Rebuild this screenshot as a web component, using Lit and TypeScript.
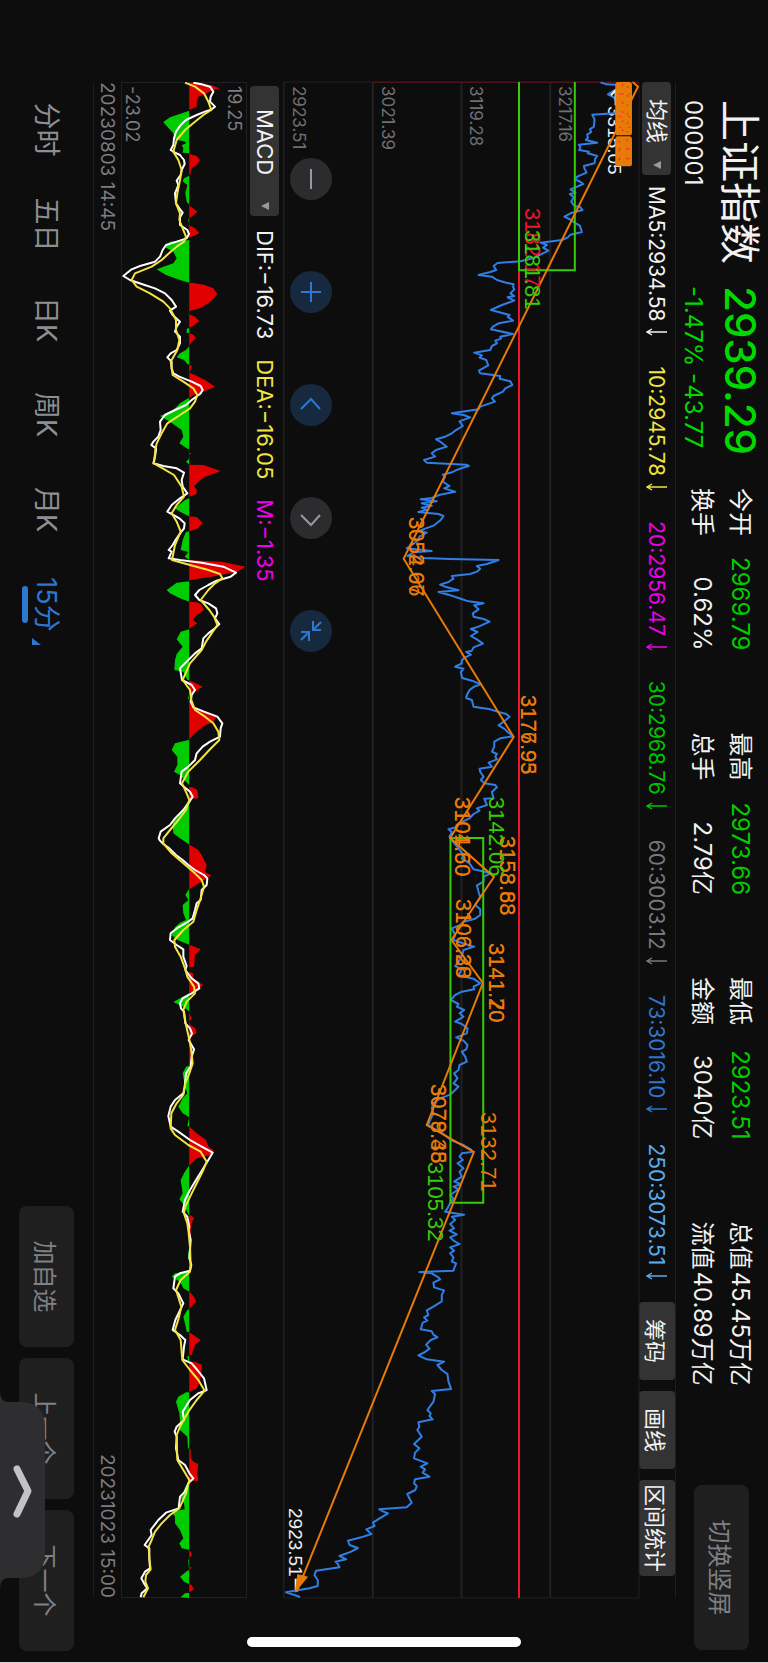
import { LitElement, html, svg, css } from "lit";
import { customElement, property, state } from "lit/decorators.js";
import { classMap } from "lit/directives/class-map.js";
import { styleMap } from "lit/directives/style-map.js";

/** Part of a series: offsets of its local origin, then "time,value" pairs. */
type Segment = { t: number; v: number; points: string };

type Point = [number, number];

const PLOT_W = 4548;
const PRICE_H = 1062;
const MACD_H = 378;
const MACD_ZERO = 205;

const unpack = (segments: Segment[]): Point[] =>
  segments.flatMap((s) =>
    s.points
      .trim()
      .split(/\s+/)
      .map((pair): Point => {
        const [t, v] = pair.split(",").map(Number);
        return [t + s.t, v + s.v];
      }),
  );

const toPoints = (points: Point[], height: number) =>
  points.map(([t, v]) => `${t},${height - v}`).join(" ");

const PRICE: Segment[] = [
  {
    t: -66,
    v: 297,
    points: `67,650 73,668 75,705 85,712 92,690 103,672 112,690 130,700 150,700 160,690 164,625 178,632 200,630 208,618
      216,622 224,610 234,612 240,606 248,640 254,585 262,590 270,586 275,615 280,612 288,640 296,634 310,632 318,600
      326,602 338,608 350,580 358,574 366,590 372,598 380,580 388,560 398,575 402,558 412,570 425,562 438,572 442,590
      450,596 460,560 470,542 480,562 488,572 497,588 516,594 524,560 532,552 540,535 548,470 555,490 563,478 572,494
      584,470 594,450 604,410 609,342 618,330 630,338 636,320 645,285 650,325 660,340 668,368 673,390 680,388 688,392
      700,380 708,392 712,372 722,392 735,355 750,322 765,378 770,372 782,388 790,345 800,328 808,322 822,388 830,350
      836,352 842,335 850,340 858,325 870,320 878,272 886,295 893,288 900,308 916,314 932,286 940,290 948,350 956,348
      964,380 975,386 985,365 995,358 1008,330 1015,325 1025,334 1040,290 1048,285 1060,205 1065,240 1072,260 1084,228
      1098,238 1112,215 1120,205 1130,185 1138,158 1146,172 1160,190 1170,158 1180,145 1190,155`,
  },
  {
    t: 1074,
    v: 297,
    points: `60,122 68,130 74,248 78,256 84,235 92,215 96,208 104,178 110,185 125,178 138,198 145,182 155,215 164,170
      174,145 178,112 184,160 190,115 197,145 203,115 210,130 216,105 222,165 228,180 240,172 256,152 266,125 272,110
      278,130 290,108 300,105 315,85 325,70 333,145 337,90 348,72 354,120 357,200 360,345 372,310 378,280 386,290
      395,280 402,260 408,205 416,210 426,195 434,170 440,185 451,225 456,165 464,195 474,225 484,255 490,300 496,272
      508,285 520,268 530,270 537,300 545,318 560,285 567,262 576,282 588,262 598,280 611,298 622,270 632,265 636,248
      644,262 655,240 664,234 670,235 680,215 686,240 696,232 714,236 722,265 733,292 740,272 750,258 765,250 774,248
      780,265 800,270 808,320 816,345 822,368 830,378 845,360 856,345 866,362 876,372 889,388 895,350 905,332 920,332
      935,325 942,340 950,335 958,340 968,315 980,325 986,288 996,290 1010,300 1020,292 1030,302 1035,335 1042,340
      1056,325 1075,330 1076,302 1095,310 1105,280 1112,288 1122,270 1135,258 1150,225 1162,218`,
  },
  {
    t: 2214,
    v: 297,
    points: `28,195 36,205 50,198 60,205 85,225 105,240 115,235 130,258 148,270 160,322 170,300 185,300 196,280 215,285
      232,290 255,275 268,290 285,290 296,275 305,240 315,230 325,205 345,215 360,210 372,245 380,272 390,240 410,235
      425,225 438,215 448,235 466,225 476,270 490,290 500,270 508,272 515,235 525,215 540,202 552,225 560,220 570,242
      580,228 590,240 605,215 612,235 625,252 640,250 652,218 662,240 675,252 688,248 695,235 710,245 725,250 735,228
      750,225 760,212 775,222 790,210 800,225 810,215 824,200 835,170 850,150 865,145 880,150 900,140 915,135 925,150
      935,170 950,190 962,205 975,240 988,262 996,265 1000,235 1010,228 1020,238 1030,222 1045,240 1055,228 1070,235
      1085,212 1092,232 1100,210 1108,225 1125,200 1135,210 1150,200 1165,192`,
  },
  {
    t: 3354,
    v: 297,
    points: `35,185 44,242 50,205 60,215 72,200 85,212 92,198 103,220 112,200 122,210 132,228 142,200 152,212 160,200
      172,210 185,205 190,218 205,212 212,210 216,108 220,145 232,165 238,170 248,150 262,152 271,182 285,175 304,175
      320,150 331,130 345,135 352,122 362,132 368,118 388,112 394,145 404,150 412,162 420,142 434,128 446,138 456,125
      466,105 478,130 485,182 495,162 510,175 522,192 545,195 567,203 573,145 582,155 605,150 630,132 640,142 648,138
      658,148 667,105 680,108 690,102 710,115 732,92 745,108 758,95 775,92 790,132 800,112 808,125 818,118 830,138
      838,95 850,92 858,100 870,96 882,72 895,78 908,85 922,70 928,-12`,
  },
  {
    t: 3564,
    v: -44,
    points: `724,340 730,355 745,330 758,310 768,315 778,290 792,305 802,275 812,235 825,240 834,265 845,245 858,210
      868,230 875,198 882,205 892,210 902,140 915,135 930,145 948,145 955,120 967,50 975,75 981,92`,
  },
];

const DIF: Segment[] = [
  {
    t: -66,
    v: -123,
    points: `68,340 73,365 80,390 95,400 110,392 125,390 140,405 148,395 155,375 165,350 180,318 195,302 215,288 235,282
      255,280 270,272 278,285 285,300 300,312 312,314 330,305 345,302 362,290 375,295 400,285 430,288 445,298 458,308
      472,300 495,300 510,322 522,327 535,320 545,290 555,258 570,248 590,240 605,225 618,180 628,155 648,130 660,150
      672,185 685,225 700,255 720,275 740,288 752,270 765,278 785,300 800,290 815,285 830,300 850,300 870,290 880,272
      892,262 905,275 925,275 940,280 950,298 965,335 978,362 990,368 1000,362 1020,335 1035,318 1050,285 1065,255
      1085,240 1110,242 1130,235 1145,220 1155,214 1165,228`,
  },
  {
    t: 1104,
    v: -123,
    points: `0,228 20,225 40,220 48,250 55,290 68,312 90,305 110,308 130,322 145,300 165,275 185,262 192,275 205,298
      220,314 235,312 248,302 268,288 285,278 300,266 305,275 325,266 330,300 338,365 350,430 368,468 380,452 392,410
      405,385 420,358 435,345 450,358 460,385 475,408 490,412 505,405 522,418 535,405 550,385 565,370 595,365 610,345
      630,325 655,300 690,306 705,335 720,345 735,335 755,332 772,340 785,372 800,412 820,427 835,422 860,420 875,390
      890,368 910,350 930,345 950,325 965,305 1000,300 1010,312 1025,330 1040,338 1060,325 1080,310 1105,285 1125,270
      1145,242 1165,236`,
  },
  {
    t: 2274,
    v: -123,
    points: `2,240 12,250 25,268 45,288 60,308 75,325 90,345 105,372 115,382 135,380 150,365 180,362 190,350 210,345
      235,338 245,325 262,295 280,272 300,270 315,290 328,310 350,310 378,320 390,316 415,335 430,355 445,358 460,335
      475,308 490,300 505,303 515,312 550,316 565,330 580,336 600,326 628,342 650,335 680,332 700,318 740,314 760,310
      780,285 800,272 828,265 860,272 875,295 900,330 920,365 938,398 960,385 985,370 1020,348 1050,330 1080,315
      1115,308 1130,322 1160,328`,
  },
  {
    t: 3444,
    v: -123,
    points: `0,326 30,332 60,330 85,328 105,334 122,330 130,300 140,285 175,280 190,295 220,310 245,298 270,286 300,278
      315,300 330,316 350,312 388,308 400,335 420,352 445,372 480,380 490,355 510,330 545,308 570,312 590,290 605,284
      620,290 655,288 690,295 705,315 730,328 745,340 760,325 785,315 800,300 835,296 848,258 870,235 900,212 915,215
      945,194 955,208 985,208 1015,210 1025,195 1045,184 1060,192 1075,202 1090,185 1102,182`,
  },
];

const DEA: Segment[] = [
  {
    t: -66,
    v: -123,
    points: `68,315 80,345 100,372 125,385 150,394 165,370 185,345 210,315 240,290 275,280 300,295 330,305 360,300
      400,292 430,288 460,300 480,298 505,308 530,318 545,312 560,290 575,272 600,245 620,215 640,165 660,155 680,170
      700,210 725,250 745,270 780,288 810,288 840,298 870,292 905,272 945,278 965,310 985,340 1005,352 1025,345
      1045,330 1065,300 1090,262 1120,245 1150,230`,
  },
  {
    t: 1104,
    v: -123,
    points: `0,226 40,222 55,248 75,282 110,305 140,312 165,290 190,275 215,290 245,302 285,285 330,276 345,330 360,385
      372,420 385,427 400,405 420,385 450,362 480,388 500,402 525,412 550,395 575,378 600,365 640,330 690,308 720,330
      750,334 780,345 800,375 820,400 845,415 870,418 900,388 930,360 965,325 1000,306 1030,320 1050,328 1080,318
      1110,295 1140,270 1165,250`,
  },
  {
    t: 2274,
    v: -123,
    points: `10,250 40,275 70,310 100,345 120,365 140,372 175,362 210,350 245,340 270,310 300,283 320,285 350,302
      385,315 410,322 440,342 460,345 485,320 510,310 555,318 590,326 625,333 670,338 700,328 730,316 765,310 790,290
      820,274 865,272 885,285 915,325 935,362 965,380 990,370 1020,355 1060,335 1100,316 1120,312 1150,322`,
  },
  {
    t: 3444,
    v: -123,
    points: `0,325 50,330 105,332 125,330 150,302 180,288 230,304 265,296 300,285 330,302 390,307 420,330 450,355
      482,374 510,350 545,325 590,300 615,290 690,292 720,310 750,328 790,318 835,298 855,270 880,245 905,225 930,215
      950,206 985,208 1018,212 1035,198 1055,196 1075,204 1102,190`,
  },
];

const HISTOGRAM: Segment[] = [
  {
    t: -66,
    v: -123,
    points: `68,328 68,345 76,395 85,418 90,400 100,380 110,355 125,350 140,350 150,328 152,328 158,310 172,270 186,250
      200,262 220,280 238,285 245,315 250,318 256,305 265,310 278,308 280,328 282,330 288,350 300,360 315,350 325,335
      345,330 346,328 347,328 355,312 364,308 375,322 400,316 425,320 435,328 438,330 455,352 470,335 474,328 475,326
      485,325 486,328 497,330 505,345 520,358 532,332 535,328 540,328 545,270 562,255 575,280 595,290 610,280 628,230
      645,258 660,300 668,328 669,340 675,375 685,400 702,412 715,402 730,385 745,360 752,330 758,328 764,330 770,345
      784,358 797,340 803,328 807,320 818,320 820,328 824,340 834,348 850,332 858,328 870,318 880,300 892,290 900,312
      912,322 914,328 918,336 930,332 938,328 945,345 960,375 980,405 995,370 1005,340 1014,328 1016,322 1030,300
      1050,280 1068,240 1085,270 1110,305 1130,310 1150,298 1166,322 1167,328`,
  },
  {
    t: 1104,
    v: -123,
    points: `8,328 10,334 16,328 28,326 35,318 44,328 45,370 63,422 80,375 95,355 110,342 118,350 132,350 140,328
      144,328 150,315 175,285 185,300 198,325 199,328 201,350 218,368 235,355 244,328 246,318 270,308 300,302 306,325
      320,314 330,328 331,328 335,425 350,497 365,470 380,395 390,330 394,328 398,290 420,260 430,270 445,300 455,328
      457,350 462,362 480,372 500,345 510,338 520,352 535,330 538,328 545,302 568,290 590,308 612,290 630,285 660,283
      665,310 690,322 691,328 696,340 710,368 725,345 732,328 745,324 752,328 755,332 775,345 785,375 800,410 815,400
      830,368 850,345 868,328 869,328 880,285 900,275 920,292 945,292 965,282 975,300 995,318 1006,328 1010,328
      1013,340 1020,352 1045,355 1047,328 1050,326 1075,310 1095,295 1120,278 1150,280 1165,300`,
  },
  {
    t: 2274,
    v: -123,
    points: `0,308 10,322 14,328 15,330 30,355 45,365 75,380 95,375 107,394 125,365 140,340 148,328 150,325 165,316
      180,325 195,308 220,310 240,318 248,300 262,285 285,275 300,292 314,328 316,332 328,362 345,345 380,342 382,328
      396,328 400,340 412,340 418,340 435,370 450,348 460,328 461,325 475,300 486,280 500,310 515,328 518,328 535,335
      545,328 556,332 565,345 578,350 590,335 593,328 605,328 625,333 655,332 675,333 677,328 680,318 700,308 740,315
      760,322 775,308 800,295 820,308 832,328 842,325 858,322 860,328 862,330 880,350 900,378 920,385 930,400 945,395
      955,350 975,330 976,328 978,326 1000,312 1020,302 1060,308 1078,298 1095,312 1125,326 1126,328 1127,335 1135,342
      1150,335 1165,332`,
  },
  {
    t: 3444,
    v: -123,
    points: `0,332 30,334 40,328 50,328 75,324 95,328 100,332 118,330 123,328 124,328 130,285 140,275 155,300 175,310
      185,328 187,330 200,342 215,348 235,330 237,328 240,322 260,310 285,316 305,320 307,328 311,335 330,362 345,345
      375,335 376,328 380,322 392,324 394,328 396,345 404,366 430,364 455,360 475,350 486,328 487,318 500,295 515,288
      550,298 575,300 600,300 620,322 655,324 657,328 658,332 685,332 695,340 702,355 730,352 752,355 753,328 755,324
      780,312 805,302 820,312 838,314 845,275 860,285 880,285 900,300 925,310 940,298 955,305 960,328 965,332 975,336
      985,328 990,325 1010,326 1011,328 1012,335 1020,328 1022,322 1040,300 1055,312 1062,328 1065,335 1078,342
      1085,330 1088,328 1090,315 1102,302 1104,328`,
  },
];

/** Swing line through the highs and lows, in plot units. */
const SWING: Point[] = [
  [0, 1043],
  [14, 1059],
  [1430, 358],
  [1965, 687],
  [2268, 497],
  [2385, 628],
  [2574, 501],
  [2703, 595],
  [3129, 427],
  [3210, 568],
  [4530, 38],
];

type Mark = { text: string; t: number; v: number; tone: string };

const MARKS: Mark[] = [
  { text: "3315.05", t: 24, v: 331, tone: "plain" },
  { text: "3182.17", t: 126, v: 249, tone: "red" },
  { text: "3181.81", t: 148, v: 249, tone: "green" },
  { text: "3054.67", t: 435, v: 134, tone: "orange" },
  { text: "3052.06", t: 435, v: 134, tone: "orange" },
  { text: "3177.93", t: 613, v: 245, tone: "orange" },
  { text: "3176.95", t: 613, v: 245, tone: "orange" },
  { text: "3104.50", t: 715, v: 180, tone: "orange" },
  { text: "3101.60", t: 715, v: 180, tone: "orange" },
  { text: "3158.88", t: 754, v: 224, tone: "orange" },
  { text: "3153.63", t: 754, v: 224, tone: "orange" },
  { text: "3142.06", t: 715, v: 213, tone: "green" },
  { text: "3106.28", t: 817, v: 181, tone: "orange" },
  { text: "3106.30", t: 817, v: 181, tone: "orange" },
  { text: "3141.20", t: 861, v: 213, tone: "orange" },
  { text: "3141.70", t: 861, v: 213, tone: "orange" },
  { text: "3079.45", t: 1002, v: 156, tone: "orange" },
  { text: "3078.38", t: 1002, v: 156, tone: "orange" },
  { text: "3132.71", t: 1030, v: 205, tone: "orange" },
  { text: "3105.32", t: 1080, v: 153, tone: "green" },
  { text: "2923.51", t: 1426, v: 13, tone: "plain" },
];

const AVERAGES = [
  { label: "MA5", value: "2934.58", tone: "white" },
  { label: "10", value: "2945.78", tone: "yellow" },
  { label: "20", value: "2956.47", tone: "magenta" },
  { label: "30", value: "2968.76", tone: "lime" },
  { label: "60", value: "3003.12", tone: "grey" },
  { label: "73", value: "3016.10", tone: "blue" },
  { label: "250", value: "3073.51", tone: "sky" },
];

const STATS = [
  [
    { label: "今开", value: "2969.79", down: true },
    { label: "换手", value: "0.62%", down: false },
  ],
  [
    { label: "最高", value: "2973.66", down: true },
    { label: "总手", value: "2.79亿", down: false },
  ],
  [
    { label: "最低", value: "2923.51", down: true },
    { label: "金额", value: "3040亿", down: false },
  ],
  [
    { label: "总值", value: "45.45万亿", down: false },
    { label: "流值", value: "40.89万亿", down: false },
  ],
];

@customElement("indicator-select")
export class IndicatorSelect extends LitElement {
  @property() name = "";
  @property({ type: Array }) options: string[] = [];

  static styles = css`
    :host {
      display: block;
      flex: none;
    }
    .box {
      display: grid;
      align-items: center;
      height: 29px;
      border-radius: 4px;
      background: #333;
    }
    .field {
      grid-area: 1 / 1;
      appearance: none;
      width: 100%;
      height: 29px;
      margin: 0;
      padding: 0 0 0 var(--inset, 17px);
      border: 0;
      background: none;
      color: #f2f2f2;
      font: inherit;
    }
    .arrow {
      grid-area: 1 / 1;
      justify-self: end;
      width: 8px;
      height: 8px;
      margin-right: 6px;
      fill: #98989d;
      pointer-events: none;
    }
  `;

  render() {
    return html`<div class="box">
      <select class="field" aria-label=${this.name}>
        ${this.options.map((o) => html`<option>${o}</option>`)}
      </select>
      <svg class="arrow" viewBox="0 0 8 8" aria-hidden="true"><path d="M0 0h8L4 8z" /></svg>
    </div>`;
  }
}

@customElement("price-chart")
export class PriceChart extends LitElement {
  static styles = css`
    :host {
      display: block;
      position: relative;
      color: #6f6f74;
    }
    .plot {
      position: relative;
      z-index: 1;
      display: block;
      width: 100%;
      height: 100%;
      overflow: visible;
    }
    .plot * {
      vector-effect: non-scaling-stroke;
    }
    .grid {
      stroke: #212123;
      stroke-width: 2;
    }
    .frame {
      fill: none;
      stroke: #212123;
      stroke-width: 1;
    }
    .limit {
      stroke: #5c1420;
      stroke-width: 1;
    }
    .price {
      fill: none;
      stroke: #2f7fe6;
      stroke-width: 2;
      stroke-linejoin: round;
    }
    .zone {
      fill: none;
      stroke: #37cc08;
      stroke-width: 2;
    }
    .level {
      stroke: #f0142d;
      stroke-width: 2;
    }
    .swing {
      fill: none;
      stroke: #e87a08;
      stroke-width: 2;
    }
    .head,
    .cluster {
      fill: #e87a08;
    }
    .specks {
      fill: none;
      stroke: #f5242d;
      stroke-width: 1;
      stroke-dasharray: 2 7;
    }
    .pointer {
      fill: none;
      stroke: #f2f2f2;
      stroke-width: 2;
    }
    .mark {
      position: absolute;
      z-index: 2;
      margin-bottom: -13px;
      font: 22px/22px "Liberation Sans", sans-serif;
      white-space: nowrap;
    }
    .plain {
      z-index: 0;
      color: #f0f0f0;
      font-size: 19px;
    }
    .red {
      color: #f0142d;
    }
    .green {
      color: #37cc08;
    }
    .orange {
      color: #e87a08;
    }
    .axis {
      position: absolute;
      inset: 0;
      display: grid;
      grid-template-rows: repeat(4, 1fr);
      font-size: 17px;
      line-height: 17px;
    }
    .tick {
      align-self: end;
      padding: 0 0 6px 4px;
    }
  `;

  render() {
    const [endT, endV] = SWING[SWING.length - 1];
    return html`
      <svg class="plot" viewBox="0 0 ${PLOT_W} ${PRICE_H}" preserveAspectRatio="none" role="img" aria-label="上证指数 15分">
        <rect class="frame" width=${PLOT_W} height=${PRICE_H} />
        ${[1, 2, 3].map((i) => {
          const y = (PRICE_H / 4) * i;
          return svg`<line class="grid" x1="0" x2=${PLOT_W} y1=${y} y2=${y} />`;
        })}
        <line class="limit" x1="1" x2="1" y1="0" y2="796" />
        <polyline class="price" points=${toPoints(unpack(PRICE), PRICE_H)} />
        <path class="pointer" d="M70 70H26M40 56L24 70L40 84" />
        <rect class="cluster" x="0" y="21" width="160" height="50" rx="8" />
        <rect class="cluster" x="163" y="21" width="90" height="50" rx="8" />
        <path
          class="specks"
          d="M12 34H150M6 49H156M172 36H244M176 59H248M36 26V67M104 26V67M136 26V67M200 28V67M230 28V67"
        />
        <line class="level" x1="495" x2=${PLOT_W} y1="359" y2="359" />
        <path class="zone" d="M0 192H565V359H0M2268 466H3362V564H2268z" />
        <polyline class="swing" points=${toPoints(SWING, PRICE_H)} />
        <path class="pointer" d="M4490 ${PRICE_H - endV + 3}h34" />
        <polygon
          class="head"
          points="${endT + 4},${PRICE_H - endV + 6} ${endT - 54},${PRICE_H - endV - 2} ${endT - 46},${PRICE_H - endV - 34}"
        />
      </svg>
      <div class="axis">
        ${["3217.16", "3119.28", "3021.39", "2923.51"].map((v) => html`<span class="tick">${v}</span>`)}
      </div>
      ${MARKS.map(
        (m) => html`<span
          class="mark ${m.tone}"
          style=${styleMap({ left: `${(m.t / 1516) * 100}%`, bottom: `${(m.v / 354) * 100}%` })}
          >${m.text}</span
        >`,
      )}
    `;
  }
}

@customElement("macd-chart")
export class MacdChart extends LitElement {
  static styles = css`
    :host {
      display: block;
      position: relative;
      color: #7c7c81;
    }
    .plot {
      display: block;
      width: 100%;
      height: 100%;
    }
    .plot * {
      vector-effect: non-scaling-stroke;
    }
    .frame {
      fill: none;
      stroke: #212123;
      stroke-width: 2;
    }
    .up {
      fill: #e10000;
    }
    .down {
      fill: #00cc00;
    }
    .dif,
    .dea {
      fill: none;
      stroke-width: 2;
      stroke-linejoin: round;
    }
    .dif {
      stroke: #fff;
    }
    .dea {
      stroke: #f5e342;
    }
    .axis {
      position: absolute;
      inset: 0;
      display: flex;
      flex-direction: column;
      justify-content: space-between;
      padding: 3px 4px 1px;
      font-size: 18px;
      line-height: 20px;
    }
  `;

  render() {
    const zero = MACD_H - MACD_ZERO;
    const bars = toPoints(unpack(HISTOGRAM), MACD_H);
    const area = `0,${zero} ${bars} ${PLOT_W},${zero}`;
    return html`
      <svg class="plot" viewBox="0 0 ${PLOT_W} ${MACD_H}" preserveAspectRatio="none" role="img" aria-label="MACD">
        <clipPath id="above"><rect width=${PLOT_W} height=${zero} /></clipPath>
        <clipPath id="below"><rect y=${zero} width=${PLOT_W} height=${MACD_ZERO} /></clipPath>
        <rect class="frame" width=${PLOT_W} height=${MACD_H} />
        <polygon class="up" clip-path="url(#above)" points=${area} />
        <polygon class="down" clip-path="url(#below)" points=${area} />
        <polyline class="dif" points=${toPoints(unpack(DIF), MACD_H)} />
        <polyline class="dea" points=${toPoints(unpack(DEA), MACD_H)} />
      </svg>
      <div class="axis"><span>19.25</span><span>-23.02</span></div>
    `;
  }
}

@customElement("app-root")
export class AppRoot extends LitElement {
  @state() private period = "15分";

  static styles = css`
    :host {
      display: block;
      height: 100vh;
      overflow: hidden;
      background: #0d0d0d;
    }
    .stage {
      position: relative;
      display: flex;
      flex-direction: column;
      box-sizing: border-box;
      width: 100vh;
      height: 100vw;
      border-right: 1px solid #d4d4d4;
      transform: translateX(100vw) rotate(90deg);
      transform-origin: 0 0;
      overflow: hidden;
      background: #0d0d0d;
      color: #f2f2f2;
      font-family: Inter, "Noto Sans CJK SC", sans-serif;
      font-size: 22px;
    }
    button {
      margin: 0;
      padding: 0;
      border: 0;
      font: inherit;
      color: inherit;
    }
    .header {
      display: flex;
      align-items: flex-start;
      box-sizing: border-box;
      height: 92px;
      padding: 0 12px 0 100px;
      font-size: 24px;
    }
    .ident {
      width: 186px;
    }
    .name {
      margin: 0;
      padding-top: 3px;
      font-size: 41px;
      font-weight: 400;
      line-height: 50px;
    }
    .code {
      margin: 0;
      padding-top: 6px;
      line-height: 32px;
    }
    .quote {
      width: 202px;
      color: #00d800;
    }
    .last {
      margin: 0;
      padding-top: 3px;
      font-size: 42px;
      font-weight: 500;
      line-height: 50px;
    }
    .stats {
      flex: 1;
      display: grid;
      grid-template-columns: repeat(4, 1fr);
      column-gap: 82px;
      margin: 0;
      padding-top: 9px;
      line-height: 38px;
    }
    .column:last-child .stat {
      justify-content: flex-start;
      gap: 2px;
    }
    .stat {
      display: flex;
      justify-content: space-between;
      white-space: nowrap;
    }
    .stat dt,
    .stat dd {
      margin: 0;
    }
    .lower {
      color: #00cc00;
    }
    .soft {
      height: 55px;
      border-radius: 8px;
      background: #1f1f1f;
      color: #808085;
      font-size: 24px;
    }
    .rotate {
      width: 165px;
      margin: 19px 0 0 99px;
    }
    .body {
      flex: 1;
      display: flex;
      flex-direction: column;
      margin: 0 64px 0 82px;
    }
    .bar {
      display: flex;
      align-items: center;
      height: 36px;
      border-top: 1px solid #1e1e20;
      white-space: nowrap;
    }
    .ma-select {
      width: 93px;
    }
    .averages {
      display: flex;
      gap: 30px;
      margin-left: 11px;
      font-size: 21px;
    }
    .average {
      display: flex;
      align-items: center;
      gap: 7px;
    }
    .dir {
      width: 8px;
      height: 21px;
      fill: none;
      stroke: currentColor;
      stroke-width: 1.4;
    }
    .actions {
      flex: none;
      display: flex;
      gap: 11px;
      margin: 0 22px 0 auto;
    }
    .action {
      min-width: 78px;
      height: 36px;
      padding: 0 4px;
      border-radius: 4px;
      background: #333;
    }
    .price-area {
      flex: 1;
      position: relative;
      display: grid;
    }
    .tools {
      position: absolute;
      z-index: 3;
      left: 76px;
      bottom: 6px;
      display: flex;
      gap: 71px;
    }
    .tool {
      width: 42px;
      height: 42px;
      border-radius: 50%;
      background: #2c2c2e;
      color: #9a9a9e;
    }
    .tool.active {
      background: #17293f;
      color: #2d78d2;
    }
    .glyph {
      display: block;
      width: 42px;
      height: 42px;
      fill: none;
      stroke: currentColor;
      stroke-width: 2;
    }
    .macd-select {
      width: 130px;
      margin-left: 4px;
      --inset: 23px;
    }
    .readings {
      display: flex;
      gap: 20px;
      margin-left: 14px;
    }
    .macd-area {
      height: 126px;
    }
    .dates {
      display: flex;
      justify-content: space-between;
      height: 27px;
      border-bottom: 1px solid #1e1e20;
      color: #7c7c81;
      font-size: 19px;
      line-height: 27px;
    }
    .footer {
      display: flex;
      align-items: flex-start;
      height: 93px;
      padding: 0 11px 0 82px;
    }
    .periods {
      display: flex;
      padding-top: 28px;
    }
    .period {
      display: flex;
      flex-direction: column;
      align-items: center;
      width: 95px;
      background: none;
      color: #8e8e93;
      font-size: 27px;
      line-height: 37px;
    }
    .period.current {
      color: #2e76cf;
    }
    .more {
      display: inline-block;
      width: 7px;
      height: 9px;
      margin: 0 -13px -5px 6px;
      fill: currentColor;
    }
    .underline {
      width: 37px;
      height: 6px;
      border-radius: 3px;
      background: currentColor;
    }
    .nav {
      display: flex;
      gap: 11px;
      margin: 19px 0 0 auto;
    }
    .nav .soft {
      width: 141px;
    }
    .handle {
      position: absolute;
      right: 72px;
      bottom: 0;
      width: 200px;
      height: 45px;
      background: none;
    }
    .handle-shape {
      display: block;
      width: 200px;
      height: 45px;
    }
    .home {
      position: absolute;
      top: 247px;
      bottom: 247px;
      right: 15px;
      width: 10px;
      border-radius: 5px;
      background: #fff;
    }
    .white {
      color: #f2f2f2;
    }
    .yellow {
      color: #f0e442;
    }
    .magenta {
      color: #ee00ee;
    }
    .lime {
      color: #00c400;
    }
    .grey {
      color: #77777c;
    }
    .blue {
      color: #2e76cf;
    }
    .sky {
      color: #58acec;
    }
  `;

  private tool(label: string, active: boolean, d: string) {
    return html`<button class=${classMap({ tool: true, active })} aria-label=${label}>
      <svg class="glyph" viewBox="0 0 42 42" aria-hidden="true"><path d=${d} /></svg>
    </button>`;
  }

  render() {
    return html`
      <main class="stage">
        <header class="header">
          <div class="ident">
            <h1 class="name">上证指数</h1>
            <p class="code">000001</p>
          </div>
          <div class="quote">
            <p class="last">2939.29</p>
            <p class="code">-1.47% -43.77</p>
          </div>
          <dl class="stats">
            ${STATS.map(
              (column) => html`<div class="column">
                ${column.map(
                  (s) => html`<div class="stat">
                    <dt>${s.label}</dt>
                    <dd class=${classMap({ lower: s.down })}>${s.value}</dd>
                  </div>`,
                )}
              </div>`,
            )}
          </dl>
          <button class="soft rotate">切换竖屏</button>
        </header>

        <section class="body">
          <div class="bar">
            <indicator-select class="ma-select" name="主图指标" .options=${["均线", "BOLL"]}></indicator-select>
            <div class="averages">
              ${AVERAGES.map(
                (a) => html`<span class="average ${a.tone}"
                  ><span>${a.label}:${a.value}</span
                  ><svg class="dir" viewBox="0 0 8 21" role="img" aria-label="下降"><path d="M4 0V20M1 15L4 20L7 15" /></svg
                ></span>`,
              )}
            </div>
            <div class="actions">
              <button class="action">筹码</button>
              <button class="action">画线</button>
              <button class="action">区间统计</button>
            </div>
          </div>
          <div class="price-area">
            <price-chart></price-chart>
            <div class="tools">
              ${this.tool("缩小", false, "M11 21H31")} ${this.tool("放大", true, "M11 21H31M21 11V31")}
              ${this.tool("左移", true, "M25 12L15 21L25 31")} ${this.tool("右移", false, "M18 12L28 21L18 31")}
              ${this.tool("收起", true, "M11 19H20V11M20 19L12 11M31 23H22V31M22 23L30 31")}
            </div>
          </div>
          <div class="bar">
            <indicator-select class="macd-select" name="副图指标" .options=${["MACD", "KDJ"]}></indicator-select>
            <div class="readings">
              <span class="white">DIF:−16.73</span>
              <span class="yellow">DEA:−16.05</span>
              <span class="magenta">M:−1.35</span>
            </div>
          </div>
          <macd-chart class="macd-area"></macd-chart>
          <div class="dates"><time>20230803 14:45</time><time>20231023 15:00</time></div>
        </section>

        <footer class="footer">
          <nav class="periods">
            ${["分时", "五日", "日K", "周K", "月K", "15分"].map((p) => {
              const current = p === this.period;
              return html`<button class=${classMap({ period: true, current })} @click=${() => (this.period = p)}>
                <span
                  >${p}${p === "15分"
                    ? html`<svg class="more" viewBox="0 0 7 9" aria-hidden="true"><path d="M7 0V9H0z" /></svg>`
                    : ""}</span
                >
                ${current ? html`<span class="underline"></span>` : ""}
              </button>`;
            })}
          </nav>
          <div class="nav">
            <button class="soft">加自选</button>
            <button class="soft">上一个</button>
            <button class="soft">下一个</button>
          </div>
        </footer>

        <button class="handle" aria-label="展开">
          <svg class="handle-shape" viewBox="0 0 200 45" aria-hidden="true">
            <path fill="#2e2e30" d="M0 45Q12 45 12 37V25Q12 0 37 0H163Q188 0 188 25V37Q188 45 200 45z" />
            <path
              d="M79 28L101 17L124 28"
              fill="none"
              stroke="#c2c2c8"
              stroke-width="7"
              stroke-linecap="round"
              stroke-linejoin="round"
            />
          </svg>
        </button>
        <div class="home"></div>
      </main>
    `;
  }
}
